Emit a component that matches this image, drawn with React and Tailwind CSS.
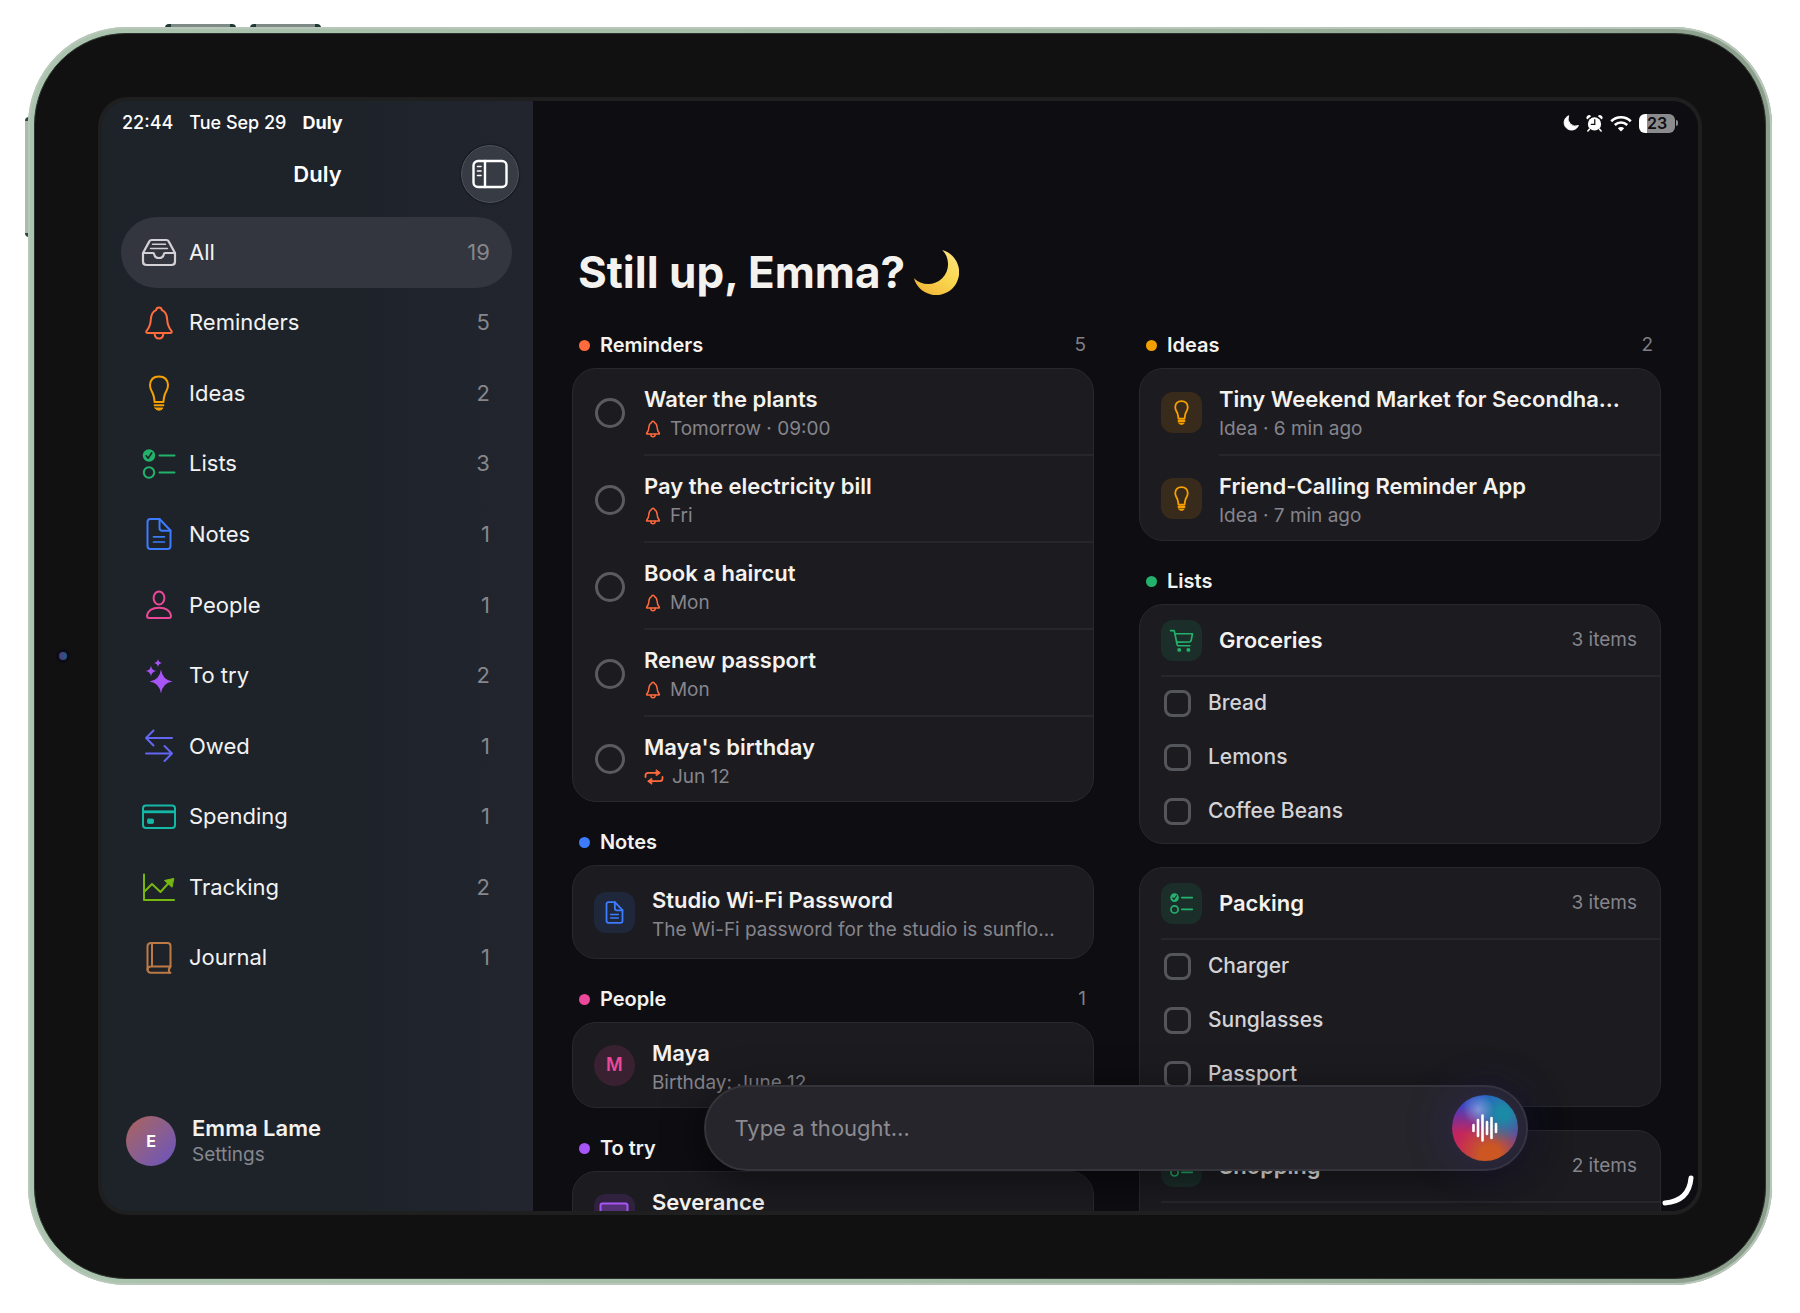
import { useState } from 'react';
import clsx from 'clsx';

const stroke = { fill: 'none', stroke: 'currentColor', strokeLinecap: 'round', strokeLinejoin: 'round' };

function InboxIcon({ className }) {
  return (
    <svg viewBox="0 0 36 36" className={className} {...stroke} strokeWidth="2.2">
      <path d="M2 19 L8.2 7.6 Q9 6 10.8 6 H25.2 Q27 6 27.8 7.6 L34 19 V27.5 Q34 31 30.5 31 H5.5 Q2 31 2 27.5 Z" />
      <path d="M2 19 H12 Q13 19 13.2 20.2 Q14 24 18 24 Q22 24 22.8 20.2 Q23 19 24 19 H34" />
      <path d="M11.5 10.3 H24.5 M9.5 14.5 H26.5" strokeWidth="1.4" />
    </svg>
  );
}

function BellIcon({ className, weight = 2 }) {
  return (
    <svg viewBox="0 0 36 36" className={className} {...stroke} strokeWidth={weight}>
      <path d="M18 2.5 Q20.4 2.5 21 5.2 Q25.8 7.4 26.2 14.5 Q26.4 21 30.4 25.8 Q31.6 28 29 28 H7 Q4.4 28 5.6 25.8 Q9.6 21 9.8 14.5 Q10.2 7.4 15 5.2 Q15.6 2.5 18 2.5 Z" />
      <path d="M13.6 28.4 Q13.8 33.6 18 33.6 Q22.2 33.6 22.4 28.4" />
    </svg>
  );
}

function BulbIcon({ className, weight = 2 }) {
  return (
    <svg viewBox="0 0 36 36" className={className} {...stroke} strokeWidth={weight}>
      <path d="M13.6 27 L13 22.5 Q12.4 19 10.4 15.5 Q9 12.8 9 10 Q9.6 1.5 18 1.5 Q26.4 1.5 27 10 Q27 12.8 25.6 15.5 Q23.6 19 23 22.5 L22.4 27 Z" />
      <path d="M13.6 30.2 H22.4" />
      <path d="M14 33 H22 Q21 35.2 18 35.2 Q15 35.2 14 33 Z" fill="currentColor" strokeWidth="1" />
    </svg>
  );
}

function ChecklistIcon({ className, weight = 2 }) {
  return (
    <svg viewBox="0 0 36 36" className={className} {...stroke} strokeWidth={weight}>
      <circle cx="8" cy="9.5" r="6.2" fill="currentColor" stroke="none" />
      <path d="M5.2 9.8 L7.2 12.2 L10.8 6.8" className="stroke-[#1e2329]" strokeWidth="1.6" />
      <circle cx="8" cy="26.5" r="5.2" />
      <path d="M18.5 9.5 H33.5 M18.5 26.5 H33.5" />
    </svg>
  );
}

function DocIcon({ className, weight = 2 }) {
  return (
    <svg viewBox="0 0 36 36" className={className} {...stroke} strokeWidth={weight}>
      <path d="M18.5 3 H9.5 Q6.5 3 6.5 6 V30 Q6.5 33 9.5 33 H26.5 Q29.5 33 29.5 30 V14.5 Z" />
      <path d="M18.5 3 V12 Q18.5 14.8 21.3 14.8 H29.5" />
      <path d="M12.5 20.8 H23.5 M12.5 26 H23.5" strokeWidth={weight * 0.85} />
    </svg>
  );
}

function PersonIcon({ className }) {
  return (
    <svg viewBox="0 0 36 36" className={className} {...stroke} strokeWidth="2">
      <ellipse cx="18" cy="11" rx="5.4" ry="6.4" />
      <path d="M8 31 Q6 31 6 28.8 Q7.5 20.8 18 20.8 Q28.5 20.8 30 28.8 Q30 31 28 31 Z" />
    </svg>
  );
}

function SparklesIcon({ className }) {
  return (
    <svg viewBox="0 0 36 36" className={className} fill="currentColor">
      <path d="M20 11.5 Q21.5 22 31.5 23.5 Q21.5 25 20 35.5 Q18.5 25 8.5 23.5 Q18.5 22 20 11.5 Z" />
      <path d="M10 7.5 Q10.6 12.5 15.5 13 Q10.6 13.5 10 18.5 Q9.4 13.5 4.5 13 Q9.4 12.5 10 7.5 Z" />
      <path d="M17 1 Q17.5 4.6 21 5 Q17.5 5.4 17 9 Q16.5 5.4 13 5 Q16.5 4.6 17 1 Z" />
    </svg>
  );
}

function SwapIcon({ className }) {
  return (
    <svg viewBox="0 0 36 36" className={className} {...stroke} strokeWidth="2">
      <path d="M31 10 H5 M12.5 2.5 L5 10 L12.5 17.5" />
      <path d="M5 25.5 H31 M23.5 18 L31 25.5 L23.5 33" />
    </svg>
  );
}

function CardIcon({ className }) {
  return (
    <svg viewBox="0 0 36 36" className={className} {...stroke} strokeWidth="2">
      <rect x="2" y="6.5" width="32" height="22.5" rx="3" />
      <path d="M2 12.8 H34" strokeWidth="2.8" strokeLinecap="butt" />
      <rect x="6.5" y="20" width="6" height="4.5" rx="1" fill="currentColor" strokeWidth="0.8" />
    </svg>
  );
}

function ChartIcon({ className }) {
  return (
    <svg viewBox="0 0 36 36" className={className} {...stroke} strokeWidth="2">
      <path d="M3 5.5 V31 H33" />
      <path d="M4 22 L11 15 L19.5 23 L28.5 13" />
      <path d="M32.5 9.5 L23.5 11.5 L30.8 18 Z" fill="currentColor" strokeWidth="1" />
    </svg>
  );
}

function BookIcon({ className }) {
  return (
    <svg viewBox="0 0 36 36" className={className} {...stroke} strokeWidth="2">
      <path d="M29.5 26.5 V6 Q29.5 3 26.5 3 H10 Q6.5 3 6.5 6.5 V29 Q6.5 32.8 10 32.8 H29.5" />
      <path d="M6.5 30 Q6.5 26.5 10 26.5 H29.5 Q26.8 29.6 28.5 32.8 M11 3 V26.5" />
    </svg>
  );
}

function CartIcon({ className }) {
  return (
    <svg viewBox="0 0 24 24" className={className} {...stroke} strokeWidth="1.6">
      <path d="M1.5 2.5 H4.3 Q5 2.5 5.2 3.3 L7.8 15.8 Q8.1 17 9.3 17 H20" />
      <path d="M5.7 5.5 H22.5 L21.3 11.8 Q21 13.2 19.7 13.3 L7.3 13.6" />
      <circle cx="9.8" cy="21" r="1.1" fill="currentColor" />
      <circle cx="18.6" cy="21" r="1.1" fill="currentColor" />
    </svg>
  );
}

function RepeatIcon({ className }) {
  return (
    <svg viewBox="0 0 20 16" className={className} {...stroke} strokeWidth="1.8">
      <path d="M1.5 8 V6.5 Q1.5 3.8 4.2 3.8 H14" />
      <path d="M18.5 8 V9.5 Q18.5 12.2 15.8 12.2 H6" />
      <path d="M12.5 1 L16.3 3.8 L12.5 6.6 Z M7.5 9.4 L3.7 12.2 L7.5 15 Z" fill="currentColor" strokeWidth="1" />
    </svg>
  );
}

function TvIcon({ className }) {
  return (
    <svg viewBox="0 0 30 24" className={className} {...stroke} strokeWidth="2">
      <rect x="1.5" y="1.5" width="27" height="18" rx="2" fill="currentColor" fillOpacity="0.3" />
      <path d="M10 22.5 H20" />
    </svg>
  );
}

function SidebarIcon({ className }) {
  return (
    <svg viewBox="0 0 36 30" className={className} {...stroke} strokeWidth="2.4">
      <rect x="1.5" y="2" width="33" height="26" rx="4.5" />
      <path d="M13 2 V28" />
      <path d="M5.5 7.5 H9 M5.5 12 H9 M5.5 16.5 H9" strokeWidth="1.6" />
    </svg>
  );
}

function MoonEmoji({ className }) {
  return (
    <svg viewBox="0 0 48 48" className={className} role="img" aria-label="Crescent moon">
      <defs>
        <linearGradient id="moon" x1="0.9" y1="0.1" x2="0.3" y2="1">
          <stop offset="0" stopColor="#fbe27a" />
          <stop offset="0.5" stopColor="#fad64f" />
          <stop offset="1" stopColor="#f1b93a" />
        </linearGradient>
      </defs>
      <path d="M30.5 1 A24 24 0 1 1 1 30.5 A20.5 20.5 0 0 0 30.5 1 Z" fill="url(#moon)" />
    </svg>
  );
}

function StatusIcons() {
  return (
    <div className="flex items-center gap-[7px] text-white">
      <svg viewBox="0 0 18 18" className="size-4" fill="currentColor">
        <path d="M6.4 0.8 A8.4 8.4 0 1 0 17.4 11.8 A8.4 8.4 0 0 1 6.4 0.8 Z" stroke="currentColor" strokeWidth="1" strokeLinejoin="round" />
      </svg>
      <svg viewBox="0 0 18 18" className="size-[17px]" fill="currentColor">
        <circle cx="9" cy="9.4" r="7" />
        <path d="M1.2 4.8 A2.5 2.5 0 0 1 5.4 1.2 Z M16.8 4.8 A2.5 2.5 0 0 0 12.6 1.2 Z" />
        <path d="M3.6 15 L2 17 M14.4 15 L16 17" stroke="currentColor" strokeWidth="1.6" strokeLinecap="round" />
        <path d="M9.3 5 V10 H5.6" fill="none" stroke="#0d0d12" strokeWidth="1.3" strokeLinecap="round" />
      </svg>
      <svg viewBox="0 0 22 17" className="h-[17px] w-[22px]" fill="none" stroke="currentColor" strokeWidth="2.6">
        <path d="M1.2 6.2 A14 14 0 0 1 20.8 6.2" />
        <path d="M4.8 10 A9 9 0 0 1 17.2 10" />
        <path d="M11 16.5 L7.8 13.3 A4.6 4.6 0 0 1 14.2 13.3 Z" fill="currentColor" stroke="none" />
      </svg>
      <div className="flex items-center gap-px">
        <div className="flex h-[19px] w-9 items-center justify-center rounded-md bg-linear-to-r from-white from-22% to-[#8b8b8d] to-22% text-base leading-none font-semibold text-[#0d0d12]">
          23
        </div>
        <div className="h-1.5 w-0.5 rounded-r-full bg-[#8b8b8d]" />
      </div>
    </div>
  );
}

const NAV = [
  { label: 'All', count: 19, Icon: InboxIcon, color: 'text-[#d3d1d6]' },
  { label: 'Reminders', count: 5, Icon: BellIcon, color: 'text-[#ff6b3d]' },
  { label: 'Ideas', count: 2, Icon: BulbIcon, color: 'text-[#f5a000]' },
  { label: 'Lists', count: 3, Icon: ChecklistIcon, color: 'text-[#22b26b]' },
  { label: 'Notes', count: 1, Icon: DocIcon, color: 'text-[#3d7bff]' },
  { label: 'People', count: 1, Icon: PersonIcon, color: 'text-[#ec4899]' },
  { label: 'To try', count: 2, Icon: SparklesIcon, color: 'text-[#a855f7]' },
  { label: 'Owed', count: 1, Icon: SwapIcon, color: 'text-[#6366f1]' },
  { label: 'Spending', count: 1, Icon: CardIcon, color: 'text-[#14b8a6]' },
  { label: 'Tracking', count: 2, Icon: ChartIcon, color: 'text-[#77b80f]' },
  { label: 'Journal', count: 1, Icon: BookIcon, color: 'text-[#bd7a45]' },
];

const REMINDERS = [
  { title: 'Water the plants', when: 'Tomorrow · 09:00' },
  { title: 'Pay the electricity bill', when: 'Fri' },
  { title: 'Book a haircut', when: 'Mon' },
  { title: 'Renew passport', when: 'Mon' },
  { title: "Maya's birthday", when: 'Jun 12', repeats: true },
];

const IDEAS = [
  { title: 'Tiny Weekend Market for Secondha…', meta: 'Idea · 6 min ago' },
  { title: 'Friend-Calling Reminder App', meta: 'Idea · 7 min ago' },
];

const LISTS = [
  { title: 'Groceries', total: '3 items', Icon: CartIcon, items: ['Bread', 'Lemons', 'Coffee Beans'] },
  { title: 'Packing', total: '3 items', Icon: ChecklistIcon, items: ['Charger', 'Sunglasses', 'Passport'] },
  { title: 'Shopping', total: '2 items', Icon: ChecklistIcon, items: [] },
];

function Sidebar() {
  const [active, setActive] = useState('All');

  return (
    <aside className="flex w-[27%] shrink-0 flex-col bg-linear-to-r from-[#1e232a] from-60% to-[#22252e]">
      <div className="flex h-11 items-center gap-4 px-5 text-lg font-medium text-white">
        <span>22:44</span>
        <span>Tue Sep 29</span>
        <span className="font-bold">Duly</span>
      </div>
      <header className="grid grid-cols-[1fr_auto_1fr] items-center px-3.5">
        <h2 className="col-start-2 text-[22px] leading-7 font-semibold text-white">Duly</h2>
        <button
          aria-label="Toggle sidebar"
          className="flex size-[58px] items-center justify-center justify-self-end rounded-full border border-[#50555d] bg-[#373c44] text-white shadow-[0_0_2px_#000]"
        >
          <SidebarIcon className="h-[30px] w-9" />
        </button>
      </header>

      <nav className="mt-3.5 flex flex-1 flex-col pr-[21px] pl-[19px]">
        {NAV.map(({ label, count, Icon, color }) => (
          <a
            key={label}
            href={`#${label}`}
            onClick={() => setActive(label)}
            className={clsx('flex flex-1 items-center gap-3 rounded-full pr-[22px] pl-5', active === label && 'bg-[#33363e]')}
          >
            <Icon className={clsx('size-9 shrink-0', color)} />
            <span className="flex-1 text-[22px] text-[#f2f2f3]">{label}</span>
            <span className="text-[22px] text-[#85878c]">{count}</span>
          </a>
        ))}
      </nav>

      <a href="#settings" className="mt-[121px] mb-[43px] flex items-center gap-4 px-6">
        <span className="flex size-[50px] items-center justify-center rounded-full bg-linear-to-br from-[#ad6156] to-[#6a50c0] text-base font-bold text-white">
          E
        </span>
        <span className="flex flex-col">
          <span className="text-[22px] leading-7 font-semibold text-[#f4f2ee]">Emma Lame</span>
          <span className="text-[19px] leading-[26px] text-[#85878e]">Settings</span>
        </span>
      </a>
    </aside>
  );
}

function Section({ title, count, dot, children }) {
  return (
    <section>
      <header className="mb-[9px] flex items-center gap-2.5 pr-2 pl-[7px]">
        <span className={clsx('size-[11px] rounded-full', dot)} />
        <h2 className="flex-1 text-xl leading-7 font-semibold text-[#f4f2ee]">{title}</h2>
        {count && <span className="text-[19px] leading-7 text-[#7f7f86]">{count}</span>}
      </header>
      {children}
    </section>
  );
}

function Card({ children }) {
  return <div className="overflow-hidden rounded-3xl border border-[#28282d] bg-[#1c1b20]">{children}</div>;
}

function Tile({ className, children }) {
  return <span className={clsx('flex size-[41px] shrink-0 items-center justify-center self-center', className)}>{children}</span>;
}

// one two-line row: leading control or tile, then title and meta
function Row({ lead, title, meta, spacing = 'gap-[17px] pl-[21px]', last }) {
  return (
    <div className={clsx('flex', spacing)}>
      {lead}
      <div className={clsx('min-w-0 flex-1 pt-[15px] pr-5', last ? 'pb-[9px]' : 'border-b-2 border-[#27262c] pb-2.5')}>
        <p className="truncate text-[22px] leading-[30px] font-semibold text-[#f4f2ee]">{title}</p>
        <div className="flex min-h-[30px] items-center gap-2 text-[19px] leading-[30px] text-[#85858c]">{meta}</div>
      </div>
    </div>
  );
}

function ListCard({ title, total, Icon, items }) {
  return (
    <Card>
      <div className="pl-[21px]">
        <header className="flex h-[72px] items-center gap-[17px] border-b-2 border-[#27262c] pr-[23px]">
          <Tile className="rounded-xl bg-[#1c2e2a] text-[#22b26b]">
            <Icon className="size-[25px]" weight={2.4} />
          </Tile>
          <h3 className="flex-1 text-[22px] font-semibold text-[#f4f2ee]">{title}</h3>
          <span className="text-[19px] text-[#85858c]">{total}</span>
        </header>
      </div>
      <ul className="min-h-14 pb-1">
        {items.map(item => (
          <li key={item}>
            <label className="flex h-[54px] items-center gap-[17px] pb-0.5 pl-6 text-[21px] font-medium text-[#d4d3d6]">
              <input type="checkbox" className="size-[27px] appearance-none rounded-lg border-3 border-[#55555c] checked:bg-[#22b26b]" />
              {item}
            </label>
          </li>
        ))}
      </ul>
    </Card>
  );
}

function Composer() {
  return (
    <form
      onSubmit={e => e.preventDefault()}
      className="absolute right-[38px] bottom-10 left-10 mx-auto flex max-w-[824px] items-center rounded-full border-2 border-[#35343b] bg-[#26252b] py-2 pr-2 pl-7 shadow-[0_8px_40px_rgba(0,0,0,0.5)]"
    >
      <input
        type="text"
        aria-label="Thought"
        placeholder="Type a thought…"
        className="min-w-0 flex-1 bg-transparent text-[22px] text-white outline-none placeholder:text-[#8b8b91]"
      />
      <button
        aria-label="Record a thought"
        className="flex size-[66px] items-center justify-center rounded-full bg-[#6a3fa0] bg-[radial-gradient(circle_at_40%_22%,rgba(175,185,235,0.6),transparent_24%),radial-gradient(circle_at_78%_28%,#1b8aa6_8%,transparent_42%),radial-gradient(circle_at_58%_92%,#cc5722_14%,transparent_50%),radial-gradient(circle_at_14%_74%,#c4265c_14%,transparent_52%),radial-gradient(circle_at_50%_0%,#2a5cc4_12%,transparent_50%),radial-gradient(circle_at_6%_30%,#4a35c4_10%,transparent_46%)] shadow-[0_0_44px_8px_rgba(60,50,170,0.2)]"
      >
        <svg viewBox="0 0 30 30" className="size-[30px]" stroke="white" strokeWidth="2.6" strokeLinecap="round">
          <path d="M3.5 12 V18 M8 7 V23 M12.5 2.5 V27.5 M17 9 V21 M21.5 5 V25 M26 11 V19" />
        </svg>
      </button>
    </form>
  );
}

function Board() {
  return (
    <main className="relative flex-1 overflow-hidden bg-[#0d0d12]">
      <div className="flex h-11 items-center justify-end pr-5">
        <StatusIcons />
      </div>

      <div className="pt-[100px] pr-[37px] pl-[39px]">
        <h1 className="flex items-center gap-2 pl-1.5 text-[44px] leading-[54px] font-bold text-[#f4f2ee]">
          Still up, Emma?
          <MoonEmoji className="size-[46px]" />
        </h1>

        <div className="mt-8 grid grid-cols-2 gap-x-[45px]">
          <div className="flex min-w-0 flex-col gap-[26px]">
            <Section title="Reminders" count="5" dot="bg-[#ff6b3d]">
              <Card>
                {REMINDERS.map((r, i) => (
                  <Row
                    key={r.title}
                    spacing="gap-[19px] pl-[22px]"
                    last={i === REMINDERS.length - 1}
                    title={r.title}
                    lead={
                      <input
                        type="checkbox"
                        aria-label={r.title}
                        className="size-[30px] shrink-0 appearance-none self-center rounded-full border-3 border-[#5a5a61] checked:bg-[#ff6b3d]"
                      />
                    }
                    meta={
                      <>
                        {r.repeats ? (
                          <RepeatIcon className="h-4 w-5 text-[#ff6b3d]" />
                        ) : (
                          <BellIcon className="size-[18px] text-[#ff6b3d]" weight={3} />
                        )}
                        {r.when}
                      </>
                    }
                  />
                ))}
              </Card>
            </Section>

            <Section title="Notes" dot="bg-[#3d7bff]">
              <Card>
                <div className="py-1">
                  <Row
                    last
                    title="Studio Wi-Fi Password"
                    meta="The Wi-Fi password for the studio is sunflo…"
                    lead={
                      <Tile className="rounded-xl bg-[#1f273b] text-[#3d7bff]">
                        <DocIcon className="size-[25px]" weight={2.6} />
                      </Tile>
                    }
                  />
                </div>
              </Card>
            </Section>

            <Section title="People" count="1" dot="bg-[#ec4899]">
              <Card>
                <Row
                  last
                  title="Maya"
                  meta="Birthday: June 12"
                  lead={<Tile className="rounded-full bg-[#3a2131] text-lg font-semibold text-[#ec4899]">M</Tile>}
                />
              </Card>
            </Section>

            <Section title="To try" dot="bg-[#a855f7]">
              <Card>
                <Row
                  last
                  title="Severance"
                  lead={
                    <Tile className="rounded-xl bg-[#30223f] text-[#a855f7]">
                      <TvIcon className="h-6 w-[30px]" />
                    </Tile>
                  }
                />
              </Card>
            </Section>
          </div>

          <div className="flex min-w-0 flex-col gap-[26px]">
            <Section title="Ideas" count="2" dot="bg-[#f5a000]">
              <Card>
                {IDEAS.map((idea, i) => (
                  <Row
                    key={idea.title}
                    last={i === IDEAS.length - 1}
                    title={idea.title}
                    meta={idea.meta}
                    lead={
                      <Tile className="rounded-xl bg-[#382b1b] text-[#f5a000]">
                        <BulbIcon className="size-[25px]" weight={2.6} />
                      </Tile>
                    }
                  />
                ))}
              </Card>
            </Section>

            <Section title="Lists" dot="bg-[#22b26b]">
              <div className="flex flex-col gap-[23px]">
                {LISTS.map(list => (
                  <ListCard key={list.title} {...list} />
                ))}
              </div>
            </Section>
          </div>
        </div>
      </div>

      <Composer />

      <svg viewBox="0 0 32 32" className="absolute right-1 bottom-1 size-8" fill="none" stroke="white" strokeWidth="5" strokeLinecap="round">
        <path d="M29 3 Q27 26 3 28" />
      </svg>
    </main>
  );
}

export default function App() {
  return (
    <div className="relative h-screen bg-white px-7 pt-[27px] pb-7 font-[Inter,'Liberation_Sans',sans-serif]">
      {/* hardware buttons */}
      <div className="absolute top-6 left-[165px] flex gap-3.5">
        <span className="h-1 w-[71px] rounded-t-sm border-x-6 border-[#1f3a36] bg-[#7d8a86]" />
        <span className="h-1 w-[71px] rounded-t-sm border-x-6 border-[#1f3a36] bg-[#7d8a86]" />
      </div>
      <span className="absolute top-[117px] left-[25px] h-[120px] w-1 rounded-l-sm border-y-4 border-[#2c4a42] bg-[#a9bcab]" />

      <div className="relative h-full rounded-[98px] bg-linear-to-r from-[#abc4ae] via-[#a5bda7] to-[#8b9f8c] p-1.5 shadow-[inset_0_0_0_2px_#b9c7ba]">
        <div className="h-full rounded-[92px] border border-[#2c312d] bg-[#111] p-[63px]">
          <div className="h-full rounded-[30px] border-4 border-[#1f1f1f] bg-[#1f1f1f]">
            <div className="flex h-full overflow-hidden rounded-[26px]">
              <Sidebar />
              <Board />
            </div>
          </div>
        </div>
        {/* camera */}
        <span className="absolute top-1/2 left-7 size-3.5 -translate-y-1/2 rounded-full border-3 border-[#0b0c14] bg-linear-to-r from-[#4a3a80] to-[#1f5a86]" />
      </div>
    </div>
  );
}
